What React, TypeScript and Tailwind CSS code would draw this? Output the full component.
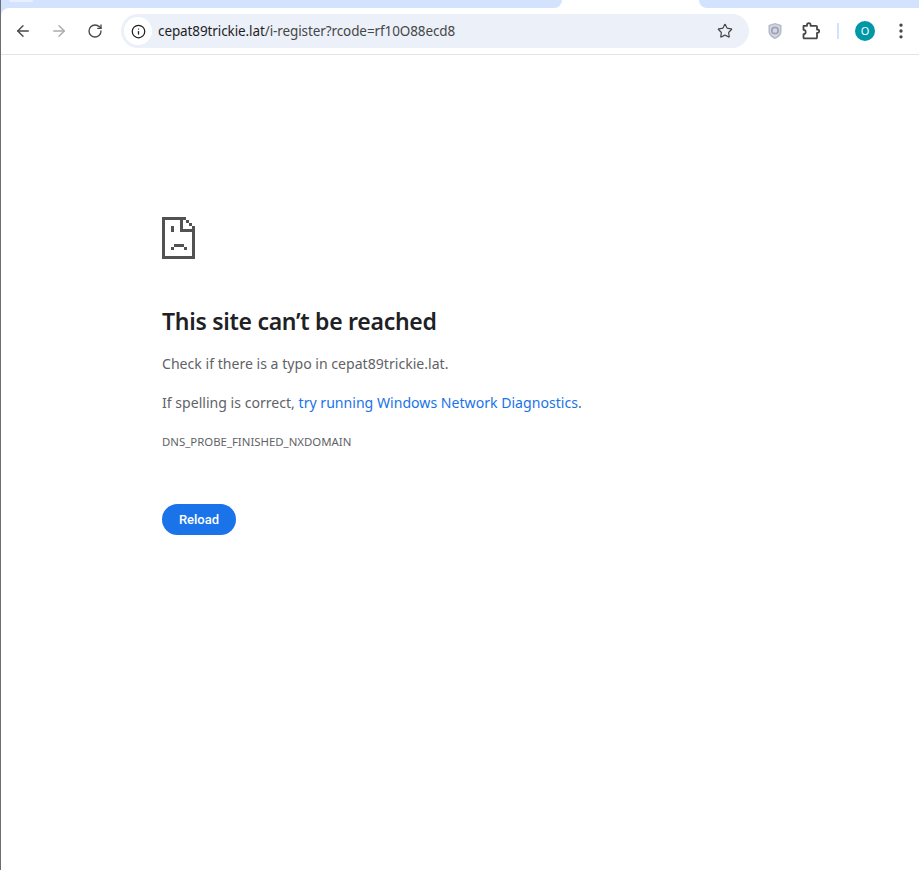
import { ArrowLeft, ArrowRight, RotateCw, Info, Star, EllipsisVertical } from "lucide-react";

const bodyFont = "font-['Noto_Sans','Open_Sans',sans-serif]";

function SadFile() {
  // pixel art, 3px grid
  return (
    <svg width="33" height="42" viewBox="0 0 33 42" fill="#525252" shapeRendering="crispEdges">
      <path d="M0 0H24V3H3V39H30V9H33V42H0Z" />
      <path d="M18 0H21V12H33V15H18Z" />
      <rect x="24" y="3" width="3" height="3" />
      <rect x="27" y="6" width="3" height="3" />
      <rect x="9" y="9" width="3" height="6" />
      <rect x="12" y="27" width="10" height="3" />
      <rect x="9" y="30" width="3" height="3" />
      <rect x="22" y="30" width="3" height="3" />
    </svg>
  );
}

function ShieldIcon() {
  return (
    <svg width="16" height="18" viewBox="0 0 16 18">
      <path d="M8 1 14.500 3V9.500C14.500 13 11.500 15.500 8 17 4.500 15.500 1.500 13 1.500 9.500V3Z" fill="#b4bacb" />
      <path d="M8 2.500 13 4V9.500C13 12 10.800 14 8 15.300 5.200 14 3 12 3 9.500V4Z" fill="#d5d8e2" />
      <circle cx="8" cy="8.500" r="3.200" fill="none" stroke="#9ea4b6" strokeWidth="1.800" />
    </svg>
  );
}

function PuzzleIcon() {
  return (
    <svg width="18" height="18" viewBox="0 0 18 18" fill="none" stroke="#474747" strokeWidth="1.800" strokeLinejoin="round">
      <path d="M1.500 3.800H5V3a1.800 1.800 0 0 1 3.600 0v.800H14.200a.8.8 0 0 1 .8.800V7.500h.500a1.700 1.700 0 0 1 0 3.400H15V15.500a.8.8 0 0 1-.8.800H2.300a.8.8 0 0 1-.8-.800V12.200a2.200 2.200 0 0 0 0-4.400Z" />
    </svg>
  );
}

export default function App() {
  return (
    <div className="min-h-[870px] bg-white border-l border-[#6e6e6e] overflow-hidden">
      <div className="bg-[#d3e3fd]">
        {/* tab strip */}
        <div className="h-2 bg-white flex">
          <div className="w-[561px] rounded-br-lg bg-[#d3e3fd]">
            <div className="ml-[8px] w-[24px] h-[2px] rounded-b-lg bg-[#e9f0fd]" />
          </div>
          <div className="w-[137px]" />
          <div className="flex-1 rounded-bl-lg bg-[#d3e3fd]" />
        </div>

        {/* toolbar */}
        <div className="h-[47px] bg-white border-b border-[#e3e3e3] flex items-center rounded-tl-lg font-['Noto_Sans',sans-serif]">
          <div className="flex items-center pl-[13px] gap-[18px] text-[#474747]">
            <ArrowLeft size={18} strokeWidth={1.800} />
            <ArrowRight size={18} strokeWidth={1.800} className="text-[#aaaaaa]" />
            <RotateCw size={16} strokeWidth={2} className="ml-[1px]" />
          </div>
          <div className="ml-[18px] w-[628px] h-[34px] rounded-full bg-[#ebf0f9] flex items-center pl-[3px] pr-[16px]">
            <span className="w-[28px] h-[28px] rounded-full bg-white flex items-center justify-center">
              <Info size={15} strokeWidth={2} className="text-[#1f1f1f]" />
            </span>
            <span className="ml-[6px] text-[13.500px] text-[#1f1f1f] tracking-[-0.100px]">
              cepat89trickie.lat<span className="text-[#474747]">/i-register?rcode=rf10O88ecd8</span>
            </span>
            <Star size={16} strokeWidth={1.800} className="ml-auto text-[#474747]" />
          </div>
          <div className="ml-[18px]"><ShieldIcon /></div>
          <div className="ml-[19px]"><PuzzleIcon /></div>
          <div className="ml-[17px] w-[2px] h-[16px] bg-[#d3e3fd]" />
          <div className="ml-[16px] w-5 h-5 rounded-full bg-[#0097a7] text-white text-[11px] flex items-center justify-center">O</div>
          <EllipsisVertical size={20} strokeWidth={2} className="ml-[16px] text-[#474747]" />
        </div>
      </div>

      {/* error page */}
      <div className={`pl-[161px] pt-[162px] ${bodyFont}`}>
        <SadFile />
        <h1 className="mt-[46px] text-[23px] leading-[32px] font-semibold text-[#202124] tracking-[-0.280px]">
          This site can’t be reached
        </h1>
        <p className="mt-[17px] text-[14.100px] leading-[20px] text-[#5f6368]">
          Check if there is a typo in cepat89trickie.lat.
        </p>
        <p className="mt-[19px] text-[14.100px] leading-[20px] text-[#5f6368]">
          If spelling is correct, <span className="text-[#1a73e8]">try running Windows Network Diagnostics</span>.
        </p>
        <div className="mt-[21px] text-[11.400px] leading-[16px] text-[#5f6368]">DNS_PROBE_FINISHED_NXDOMAIN</div>
        <button className="mt-[54px] w-[74px] h-[31px] rounded-full bg-[#1a73e8] text-white text-[13px] font-medium font-['Roboto',sans-serif] flex items-center justify-center">
          Reload
        </button>
      </div>
    </div>
  );
}
